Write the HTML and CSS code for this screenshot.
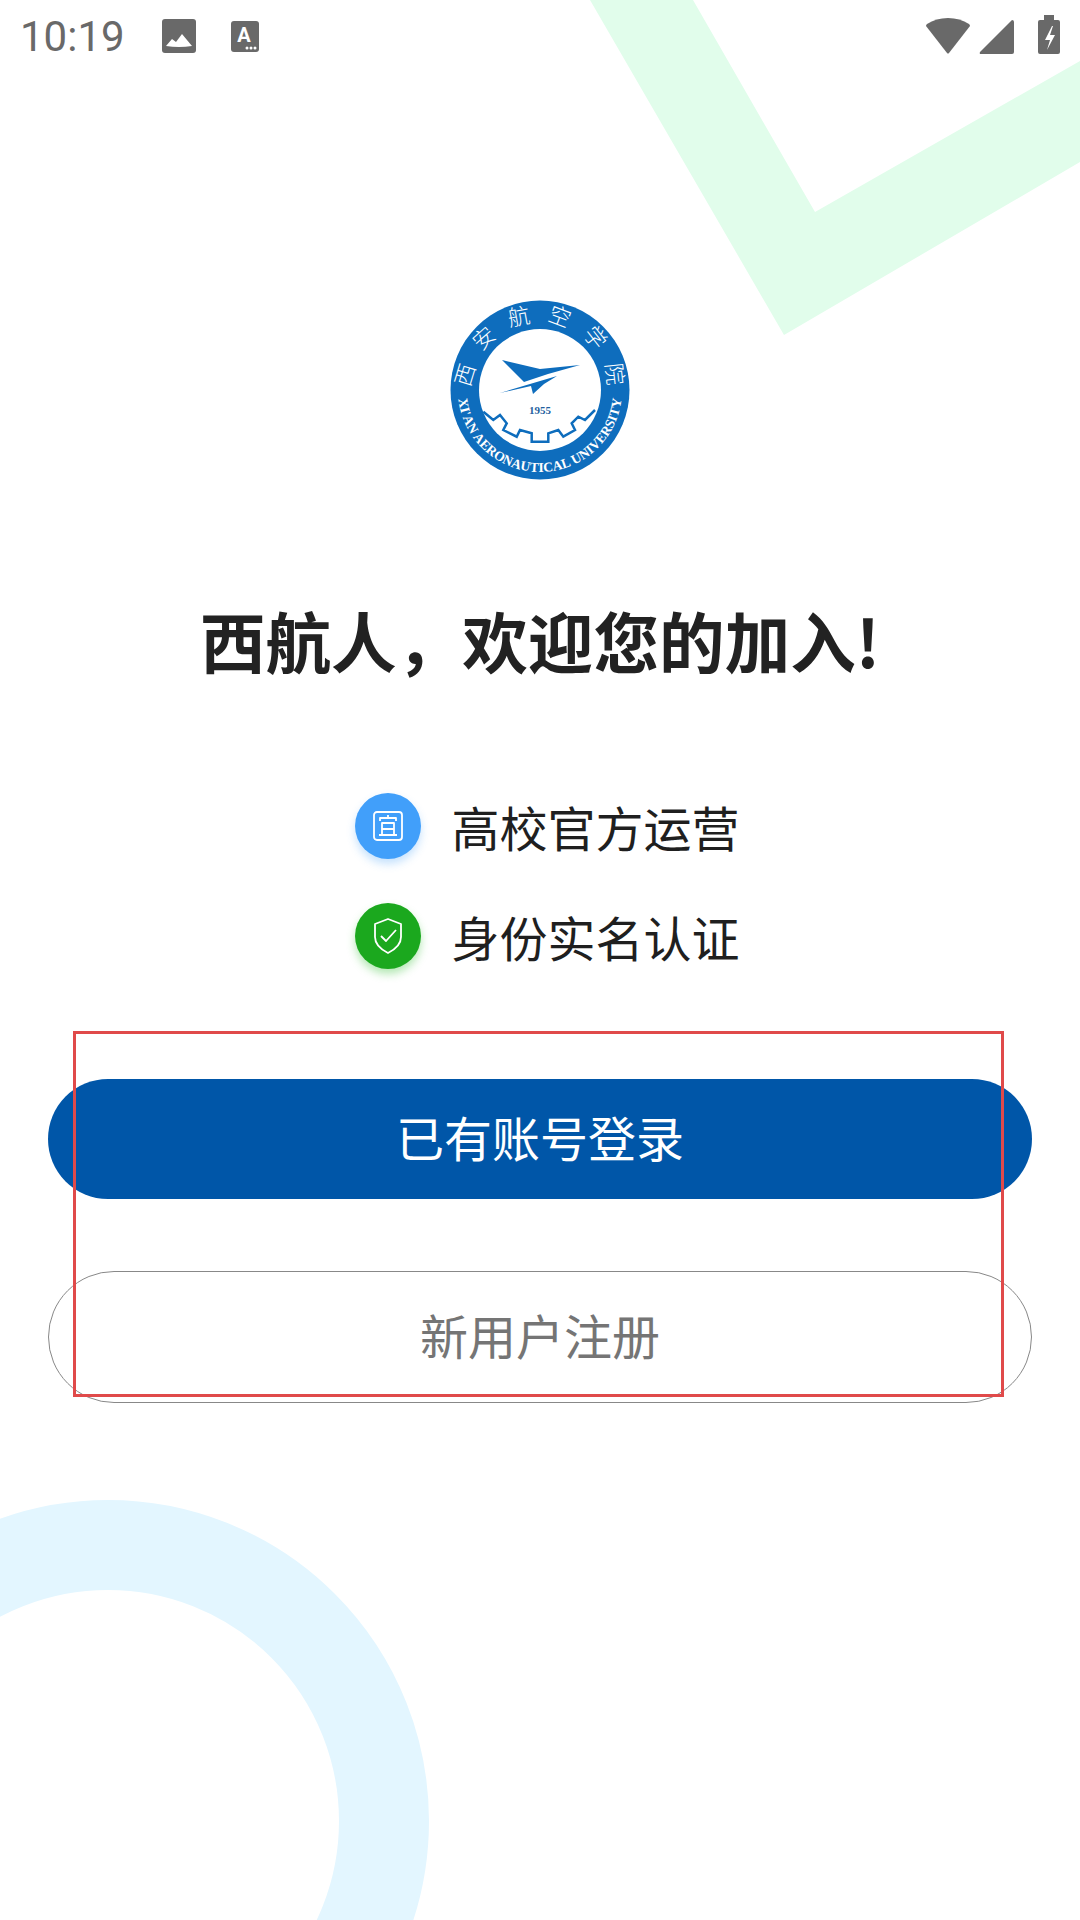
FILE: index.html
```html
<!DOCTYPE html>
<html lang="zh-CN">
<head>
<meta charset="utf-8">
<title>西航人</title>
<link rel="stylesheet" href="styles.css">
</head>
<body>
<div class="screen">
  <svg class="deco" viewBox="0 0 1080 1920" aria-hidden="true">
    <polygon class="deco-green" points="590,0 693,0 815,212 1080,61 1080,162 784,335"/>
    <circle class="deco-blue" cx="108" cy="1821" r="276"/>
  </svg>

  <header class="status">
    <div class="status-left">
      <span class="time">10:19</span>
      <svg class="ic-image" viewBox="0 0 34 34"><rect width="34" height="34" rx="3" fill="#696969"/><path d="M4 27l6-7 4 3 6-8 10 12q-13 2-26 0z" fill="#fff"/></svg>
      <svg class="ic-a" viewBox="0 0 28 31"><rect width="28" height="31" rx="3" fill="#696969"/><text x="13" y="21" class="ic-a-text">A</text><circle cx="16" cy="27" r="1.5" fill="#fff"/><circle cx="20" cy="27" r="1.5" fill="#fff"/><circle cx="24" cy="27" r="1.5" fill="#fff"/></svg>
    </div>
    <div class="status-right">
      <svg class="ic-wifi" viewBox="0 0 46 36"><path d="M1 8Q1 7 2 6C8 2 15 0 23 0s15 2 21 6q1 1 1 2L24 35q-1 1-2 0z" fill="#696969"/></svg>
      <svg class="ic-signal" viewBox="0 0 35 34"><path d="M33 0q2 0 2 2v30q0 2-2 2H2q-2 0-1-2L32 1z" fill="#696969"/></svg>
      <svg class="ic-batt" viewBox="0 0 22 39"><path d="M6 0h10v5h4q2 0 2 2v30q0 2-2 2H2q-2 0-2-2V7q0-2 2-2h4z" fill="#696969"/><path d="M14 11L7 25h5l-3 10 8-15h-5l3-9z" fill="#fff"/></svg>
    </div>
  </header>

  <main class="content">
    <svg class="logo" viewBox="0 0 184 184">
      <defs>
        <path id="arc-top" d="M26.3 109.6A68 68 0 1 1 157.7 109.6"/>
        <path id="arc-bottom" d="M24.8 45A82 82 0 1 0 159.2 45"/>
      </defs>
      <circle cx="92" cy="92" r="89.5" fill="#0e6dbd"/>
      <circle cx="92" cy="92" r="61" fill="#fff"/>
      <path class="logo-gear" d="M35.3 113.7L45.3 122L52 117L58.7 125.3L55.3 132L68.7 138.7L72 132L83.7 135.3V143.7H100.3V135.3L110.3 132L115.3 138.7L127 132L123.7 125.3L130.3 118.7L137 122L147 112"/>
      <path class="logo-plane" d="M54 62L92 71L132 67L100 76L76 84Z"/>
      <path class="logo-plane" d="M52 95L109 78L96 86L85 96L83 88Z"/>
      <text x="92" y="116" text-anchor="middle" class="logo-year">1955</text>
      <text class="logo-cn"><textPath href="#arc-top" startOffset="52.5%" text-anchor="middle">西安航空学院</textPath></text>
      <text class="logo-en"><textPath href="#arc-bottom" startOffset="50%" text-anchor="middle">XI'AN AERONAUTICAL UNIVERSITY</textPath></text>
    </svg>

    <h1 class="title">西航人，欢迎您的加入!</h1>

    <ul class="features">
      <li class="feature">
        <span class="badge badge-blue">
          <svg viewBox="0 0 30 30" class="badge-icon icon-doc"><rect x="1" y="1" width="28" height="28" rx="3"/><path d="M15 4v3M7 10V7h16v3M9 12h12v12H9zM9 18h12M6 24h18"/></svg>
        </span>
        <span class="feature-text">高校官方运营</span>
      </li>
      <li class="feature">
        <span class="badge badge-green">
          <svg viewBox="0 0 30 36" class="badge-icon icon-shield"><path d="M15 1l13 5v13c0 8-7 13-13 16C9 32 2 27 2 19V6z"/><path d="M8 18l5 5 10-11"/></svg>
        </span>
        <span class="feature-text">身份实名认证</span>
      </li>
    </ul>

    <div class="actions">
      <button class="btn btn-primary">已有账号登录</button>
      <button class="btn btn-outline">新用户注册</button>
      <div class="highlight"></div>
    </div>
  </main>
</div>
</body>
</html>
```
FILE: styles.css
```css
* { box-sizing: border-box; }
html, body { margin: 0; padding: 0; }
body {
  width: 1080px;
  height: 1920px;
  background: #fff;
  font-family: "Noto Sans CJK SC", "Noto Sans", sans-serif;
  overflow: hidden;
}
.screen { position: relative; width: 1080px; height: 1920px; overflow: hidden; }
.deco { position: absolute; left: 0; top: 0; width: 1080px; height: 1920px; }
.deco-green { fill: #e1fdeb; }
.deco-blue { fill: none; stroke: #e3f6ff; stroke-width: 90; }

.status {
  position: relative;
  display: flex;
  justify-content: space-between;
  align-items: center;
  height: 72px;
  padding: 0 20px;
}
.status-left { display: flex; align-items: center; }
.time { font-family: Roboto, sans-serif; font-size: 42px; font-weight: 400; color: #696969; width: 142px; }
.ic-image { width: 34px; height: 34px; }
.ic-a { width: 28px; height: 31px; margin-left: 35px; }
.ic-a-text { font-family: Roboto, sans-serif; font-weight: 700; font-size: 20px; fill: #fff; text-anchor: middle; }
.status-right { display: flex; align-items: flex-end; margin-bottom: 4px; }
.ic-wifi { width: 46px; height: 36px; }
.ic-signal { width: 35px; height: 34px; margin-left: 8px; }
.ic-batt { width: 22px; height: 39px; margin-left: 24px; }

.content { position: relative; display: flex; flex-direction: column; align-items: center; }
.logo { width: 184px; height: 184px; margin-top: 226px; overflow: visible; }
.logo-cn { font-family: "Noto Sans CJK SC", sans-serif; font-size: 22px; font-weight: 300; fill: #fff; letter-spacing: 15px; }
.logo-en { font-family: "Liberation Serif", serif; font-size: 13.5px; font-weight: 700; fill: #fff; }
.logo-year { font-family: "Liberation Serif", serif; font-size: 11px; font-weight: 700; fill: #1f5f9e; }
.logo-plane { fill: #0e6dbd; }
.logo-gear { fill: none; stroke: #0e6dbd; stroke-width: 2.5; }

.title {
  margin: 113px 0 0;
  font-size: 65.6px;
  line-height: 90px;
  font-weight: 700;
  color: #222;
}
.features { list-style: none; margin: 108px 0 0 15px; padding: 0; display: flex; flex-direction: column; gap: 44px; }
.feature { display: flex; align-items: center; gap: 30px; }
.feature-text { font-size: 48px; line-height: 66px; color: #1f1f1f; }
.badge { width: 66px; height: 66px; border-radius: 50%; display: flex; align-items: center; justify-content: center; }
.badge-blue { background: #419ffa; box-shadow: 0 5px 8px rgba(65, 159, 250, 0.3); }
.badge-green { background: #1ba81e; box-shadow: 0 5px 8px rgba(40, 190, 40, 0.35); }
.badge-icon { fill: none; stroke: #fff; stroke-width: 1.8; stroke-linejoin: round; }
.icon-doc { width: 30px; height: 30px; }
.icon-shield { width: 30px; height: 36px; }

.actions { position: relative; align-self: stretch; padding: 0 48px; display: flex; flex-direction: column; margin-top: 110px; }
.btn { display: block; width: 100%; font-family: inherit; font-size: 48px; border-radius: 66px; padding: 0 0 6px; }
.btn-primary { height: 120px; background: #0056a8; color: #fff; border: 0; }
.btn-outline { height: 132px; margin-top: 72px; background: transparent; color: #757575; border: 1px solid #888; }
.highlight { position: absolute; left: 73px; top: -48px; width: 931px; height: 366px; border: 3px solid #e04a4a; }
```
